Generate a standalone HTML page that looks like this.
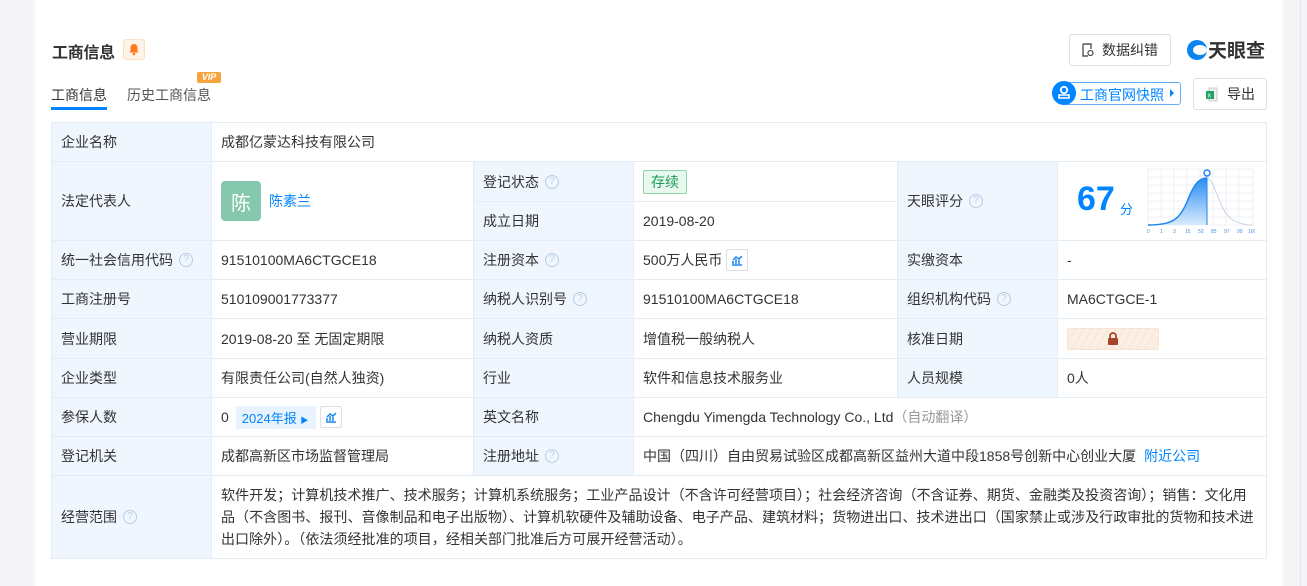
<!DOCTYPE html>
<html><head><meta charset="utf-8"><style>
*{margin:0;padding:0;box-sizing:border-box}
body{width:1307px;height:586px;background:#f5f5f7;font-family:"Liberation Sans","Noto Sans CJK SC",sans-serif;font-size:14px;color:#333;position:relative;overflow:hidden}
.card{position:absolute;left:35px;top:0;width:1248px;height:586px;background:#fff}
.vl{position:absolute;left:1300px;top:0;width:1px;height:586px;background:#e6e6ea}
.a{position:absolute}
.c{position:absolute;border-right:1px solid #e4ecf5;border-bottom:1px solid #e4ecf5;display:flex;align-items:center;padding-left:9px;white-space:nowrap}
.l{background:#eff6fd}
.q{display:inline-block;width:14px;height:14px;border:1px solid #b9cde3;border-radius:50%;font-size:10px;color:#b9cde3;text-align:center;line-height:12px;margin-left:6px}
.blue{color:#0084ff}
.btn{position:absolute;border:1px solid #dcdfe6;border-radius:3px;background:#fff;display:flex;align-items:center;justify-content:center;font-size:14px}
.ch{display:inline-flex;width:22px;height:22px;border:1px solid #dcdfe6;border-radius:2px;margin-left:4px;align-items:center;justify-content:center}
</style></head><body>
<div class="card"></div><div class="vl"></div>
<div class="a" style="left:52px;top:39px;font-size:16px;font-weight:bold;color:#333;letter-spacing:-0.3px">工商信息</div>
<div class="a" style="left:123px;top:39px;width:22px;height:21px;background:#fff3e8;border:1px solid #fde0c4;border-radius:3px"><svg style="position:absolute;left:4px;top:3px" width="12" height="13" viewBox="0 0 12 13"><path d="M6 1C3.5 1 2.5 3 2.5 5V8L1.5 9.5H10.5L9.5 8V5C9.5 3 8.5 1 6 1Z" fill="#ff7a1a"/><circle cx="6" cy="11" r="1.3" fill="#ff7a1a"/></svg></div>
<div class="a" style="left:51px;top:85px;font-size:14px">工商信息</div>
<div class="a" style="left:51px;top:107px;width:56px;height:3px;background:#0084ff"></div>
<div class="a" style="left:127px;top:85px;font-size:14px;color:#555">历史工商信息</div>
<div class="a" style="left:197px;top:72px;width:24px;height:11px;background:#f5a53b;border-radius:2px;color:#fff;font-size:9px;font-weight:bold;font-style:italic;text-align:center;line-height:11px">VIP</div>
<div class="btn" style="left:1069px;top:34px;width:102px;height:32px"><svg width="12" height="14" viewBox="0 0 12 14" style="margin-right:8px"><path d="M1 1H9V6M1 1V13H6" fill="none" stroke="#555" stroke-width="1.4"/><circle cx="8.5" cy="10" r="2.5" fill="none" stroke="#555" stroke-width="1.3"/></svg>数据纠错</div>
<div class="a" style="left:1187px;top:40px;width:20px;height:20px;border-radius:50%;background:#0b84f1"></div>
<div class="a" style="left:1193px;top:45px;width:14px;height:10px;border-radius:50%;background:#fff"></div>
<div class="a" style="left:1208px;top:36px;font-size:19px;font-weight:bold;color:#333">天眼查</div>
<div class="a" style="left:1064px;top:82px;width:117px;height:23px;border:1px solid #66aef8;border-radius:3px"></div>
<div class="a" style="left:1052px;top:81px;width:24px;height:24px;border-radius:50%;background:#0084ff"><svg style="position:absolute;left:5px;top:4px" width="14" height="16" viewBox="0 0 14 16"><circle cx="7" cy="5" r="3.2" fill="none" stroke="#fff" stroke-width="1.8"/><path d="M2 13H12V10H2Z" fill="none" stroke="#fff" stroke-width="1.6"/></svg></div>
<div class="a blue" style="left:1080px;top:85px;font-size:14px">工商官网快照</div>
<div class="a" style="left:1170px;top:89px;width:0;height:0;border-left:4px solid #0084ff;border-top:4px solid transparent;border-bottom:4px solid transparent"></div>
<div class="btn" style="left:1193px;top:78px;width:74px;height:32px"><svg width="14" height="15" viewBox="0 0 14 15" style="margin-right:8px"><path d="M4 1H12V14H4Z" fill="#eee" stroke="#ccc"/><rect x="1" y="4" width="8" height="8" fill="#21a366"/><text x="2.5" y="10.5" font-size="7" fill="#fff" font-family="Liberation Sans">x</text></svg>导出</div>

<div class="a" style="left:51px;top:122px;width:1216px;height:437px;border-left:1px solid #e4ecf5;border-top:1px solid #e4ecf5"></div>
<div class="c l" style="left:52px;top:123px;width:160px;height:39px">企业名称</div>
<div class="c" style="left:212px;top:123px;width:1055px;height:39px">成都亿蒙达科技有限公司</div>
<div class="c l" style="left:52px;top:162px;width:160px;height:79px">法定代表人</div>
<div class="c" style="left:212px;top:162px;width:262px;height:79px"><span style="width:40px;height:40px;background:#85c8ad;border-radius:4px;color:#fff;font-size:20px;display:inline-flex;align-items:center;justify-content:center;margin-right:8px">陈</span><span class="blue">陈素兰</span></div>
<div class="c l" style="left:474px;top:162px;width:160px;height:40px">登记状态<span class="q">?</span></div>
<div class="c" style="left:634px;top:162px;width:264px;height:40px"><span style="border:1px solid #8ed3a7;background:#e8f8ee;color:#1a9b5a;padding:1px 7px;border-radius:2px">存续</span></div>
<div class="c l" style="left:474px;top:202px;width:160px;height:39px">成立日期</div>
<div class="c" style="left:634px;top:202px;width:264px;height:39px">2019-08-20</div>
<div class="c l" style="left:898px;top:162px;width:160px;height:79px">天眼评分<span class="q">?</span></div>
<div class="c" style="left:1058px;top:162px;width:209px;height:79px"></div>
<div class="a" style="left:1077px;top:180px;font-size:34px;font-weight:bold;color:#0084ff">67</div>
<div class="a" style="left:1120px;top:199px;font-size:13px;color:#0084ff">分</div>
<svg class="a" style="left:1147px;top:168px" width="108" height="68" viewBox="0 0 108 68">
<g stroke="#eef0f4" stroke-width="1"><path d="M1 1H106M1 9H106M1 17H106M1 25H106M1 33H106M1 41H106M1 49H106M1 57H106"/><path d="M1 1V57M14 1V57M27 1V57M40 1V57M53 1V57M66 1V57M79 1V57M92 1V57M106 1V57"/></g>
<defs><linearGradient id="g" x1="0" y1="0" x2="0" y2="1"><stop offset="0" stop-color="#2a8cf2"/><stop offset="1" stop-color="#d9ebfd"/></linearGradient></defs>
<path d="M1 57C25 57 32 52 40 34C47 16 52 10 60 10V57Z" fill="url(#g)"/>
<path d="M1 57C25 57 32 52 40 34C47 16 52 10 60 10" fill="none" stroke="#1d86f0" stroke-width="1.5"/>
<path d="M60 10C66 11 70 30 78 44C85 55 97 57 106 57" fill="none" stroke="#c6d6e6"/>
<path d="M60 10V57" stroke="#1d86f0"/>
<circle cx="60" cy="5" r="3" fill="#fff" stroke="#1d86f0" stroke-width="1.5"/>
<text y="65" font-size="5" fill="#4a90e2" font-family="Liberation Sans"><tspan x="0">0</tspan><tspan x="13">1</tspan><tspan x="26">3</tspan><tspan x="38">15</tspan><tspan x="51">50</tspan><tspan x="64">85</tspan><tspan x="77">97</tspan><tspan x="90">99</tspan><tspan x="101">100</tspan></text>
</svg>
<div class="c l" style="left:52px;top:241px;width:160px;height:39px">统一社会信用代码<span class="q">?</span></div>
<div class="c" style="left:212px;top:241px;width:262px;height:39px">91510100MA6CTGCE18</div>
<div class="c l" style="left:474px;top:241px;width:160px;height:39px">注册资本<span class="q">?</span></div>
<div class="c" style="left:634px;top:241px;width:264px;height:39px">500万人民币<span class="ch"><svg width="12" height="11" viewBox="0 0 12 11"><path d="M1 10H11M2 9V6M5 9V4M8 9V5M2 5L5 2L8 4L11 1" fill="none" stroke="#1d86f0" stroke-width="1.5"/></svg></span></div>
<div class="c l" style="left:898px;top:241px;width:160px;height:39px">实缴资本</div>
<div class="c" style="left:1058px;top:241px;width:209px;height:39px">-</div>
<div class="c l" style="left:52px;top:280px;width:160px;height:39px">工商注册号</div>
<div class="c" style="left:212px;top:280px;width:262px;height:39px">510109001773377</div>
<div class="c l" style="left:474px;top:280px;width:160px;height:39px">纳税人识别号<span class="q">?</span></div>
<div class="c" style="left:634px;top:280px;width:264px;height:39px">91510100MA6CTGCE18</div>
<div class="c l" style="left:898px;top:280px;width:160px;height:39px">组织机构代码<span class="q">?</span></div>
<div class="c" style="left:1058px;top:280px;width:209px;height:39px">MA6CTGCE-1</div>
<div class="c l" style="left:52px;top:319px;width:160px;height:40px">营业期限</div>
<div class="c" style="left:212px;top:319px;width:262px;height:40px">2019-08-20 至 无固定期限</div>
<div class="c l" style="left:474px;top:319px;width:160px;height:40px">纳税人资质</div>
<div class="c" style="left:634px;top:319px;width:264px;height:40px">增值税一般纳税人</div>
<div class="c l" style="left:898px;top:319px;width:160px;height:40px">核准日期</div>
<div class="c" style="left:1058px;top:319px;width:209px;height:40px"><span style="width:92px;height:22px;background:repeating-linear-gradient(120deg,#fbefe3 0 6px,#f5e4d4 6px 7px);border:1px solid #f6e3d2;border-radius:2px;display:inline-flex;align-items:center;justify-content:center"><svg width="12" height="13" viewBox="0 0 12 13"><path d="M3 6V4A3 3 0 0 1 9 4V6" fill="none" stroke="#a8442a" stroke-width="1.8"/><rect x="1" y="6" width="10" height="7" rx="1" fill="#a8442a"/></svg></span></div>
<div class="c l" style="left:52px;top:359px;width:160px;height:39px">企业类型</div>
<div class="c" style="left:212px;top:359px;width:262px;height:39px">有限责任公司(自然人独资)</div>
<div class="c l" style="left:474px;top:359px;width:160px;height:39px">行业</div>
<div class="c" style="left:634px;top:359px;width:264px;height:39px">软件和信息技术服务业</div>
<div class="c l" style="left:898px;top:359px;width:160px;height:39px">人员规模</div>
<div class="c" style="left:1058px;top:359px;width:209px;height:39px">0人</div>
<div class="c l" style="left:52px;top:398px;width:160px;height:39px">参保人数</div>
<div class="c" style="left:212px;top:398px;width:262px;height:39px">0<span style="background:#e8f3fe;color:#0084ff;font-size:13px;padding:2px 8px 2px 6px;border-radius:2px;margin-left:7px">2024年报 <span style="font-size:8px">▶</span></span><span class="ch"><svg width="12" height="11" viewBox="0 0 12 11"><path d="M1 10H11M2 9V6M5 9V4M8 9V5M2 5L5 2L8 4L11 1" fill="none" stroke="#1d86f0" stroke-width="1.5"/></svg></span></div>
<div class="c l" style="left:474px;top:398px;width:160px;height:39px">英文名称</div>
<div class="c" style="left:634px;top:398px;width:633px;height:39px">Chengdu Yimengda Technology Co., Ltd<span style="color:#999">（自动翻译）</span></div>
<div class="c l" style="left:52px;top:437px;width:160px;height:39px">登记机关</div>
<div class="c" style="left:212px;top:437px;width:262px;height:39px">成都高新区市场监督管理局</div>
<div class="c l" style="left:474px;top:437px;width:160px;height:39px">注册地址<span class="q">?</span></div>
<div class="c" style="left:634px;top:437px;width:633px;height:39px">中国（四川）自由贸易试验区成都高新区益州大道中段1858号创新中心创业大厦<span class="blue" style="margin-left:8px">附近公司</span></div>
<div class="c l" style="left:52px;top:476px;width:160px;height:83px">经营范围<span class="q">?</span></div>
<div class="c" style="left:212px;top:476px;width:1055px;height:83px;white-space:normal;line-height:22px;padding-right:8px;letter-spacing:0.05px">软件开发；计算机技术推广、技术服务；计算机系统服务；工业产品设计（不含许可经营项目）；社会经济咨询（不含证券、期货、金融类及投资咨询）；销售：文化用品（不含图书、报刊、音像制品和电子出版物）、计算机软硬件及辅助设备、电子产品、建筑材料；货物进出口、技术进出口（国家禁止或涉及行政审批的货物和技术进出口除外）。（依法须经批准的项目，经相关部门批准后方可展开经营活动）。</div>
</body></html>
